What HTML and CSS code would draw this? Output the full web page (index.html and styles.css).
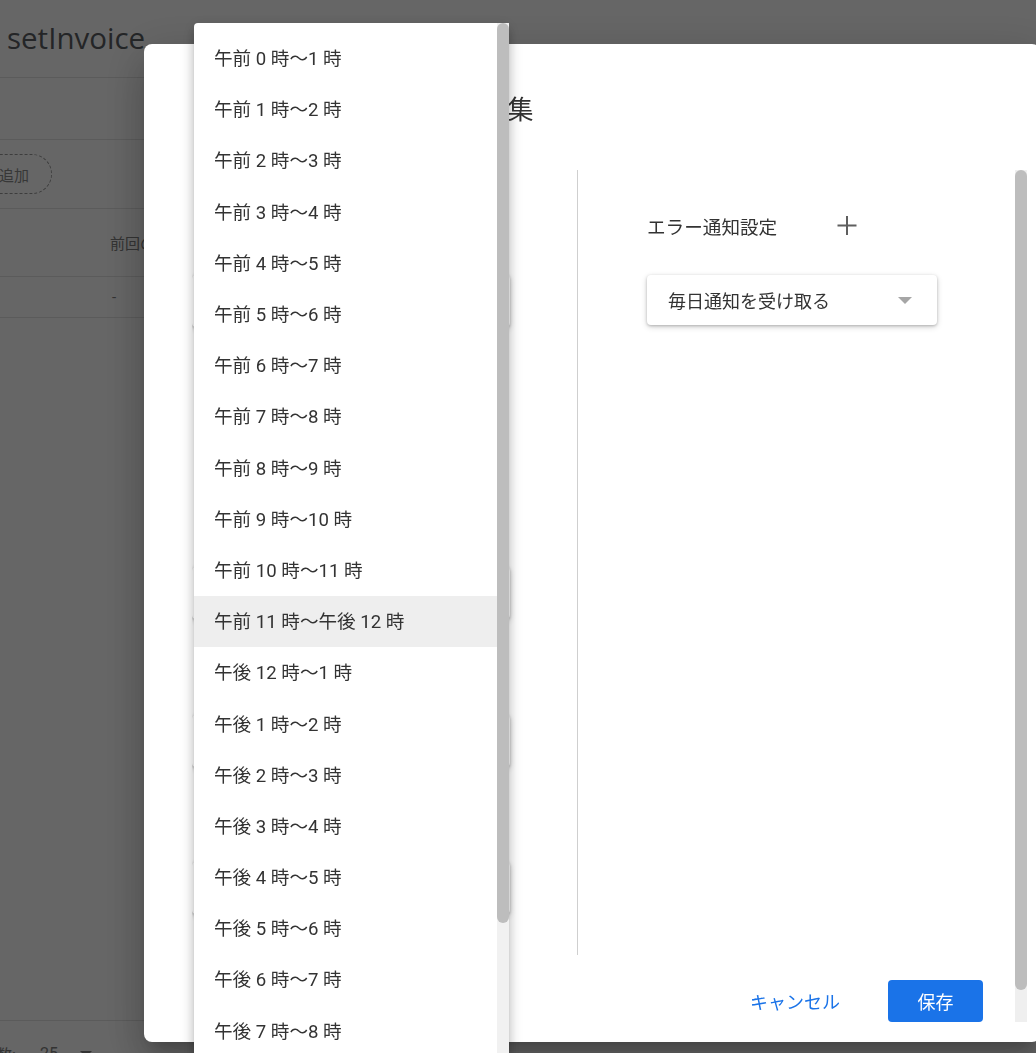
FILE: index.html
```html
<!DOCTYPE html>
<html lang="ja">
<head>
<meta charset="utf-8">
<title>setInvoice</title>
<link rel="stylesheet" href="styles.css">
</head>
<body>
<div class="page">
  <header class="app-header">setInvoice</header>
  <div class="subbar"></div>
  <div class="actions"><button class="add-btn">追加</button></div>
  <div class="table-head"><span class="col-last">前回の実行</span></div>
  <div class="table-row"><span class="col-last">-</span></div>
  <div class="spacer"></div>
  <footer class="paginator"><span>数:</span><span class="pg-size">25</span><span class="pg-arrow"></span></footer>
</div>

<div class="overlay"></div>

<div class="dialog">
  <h1 class="dialog-title">setInvoice のトリガーを編集</h1>
  <div class="dialog-body">
    <div class="dialog-scroll">
      <div class="columns">
        <div class="col-left">
          <div class="field f1">
            <div class="field-label">実行する関数を選択</div>
            <div class="select-box">setInvoice<span class="caret"></span></div>
          </div>
          <div class="field f2">
            <div class="field-label">イベントのソースを選択</div>
            <div class="select-box">時間主導型<span class="caret"></span></div>
          </div>
          <div class="field f3">
            <div class="field-label">時間ベースのトリガーのタイプを選択</div>
            <div class="select-box">日付ベースのタイマー<span class="caret"></span></div>
          </div>
          <div class="field f4">
            <div class="field-label">時刻を選択</div>
            <div class="select-box">午前 11 時～午後 12 時<span class="caret"></span></div>
          </div>
        </div>
        <div class="divider"></div>
        <div class="col-right">
          <div class="notify-row">
            <span class="notify-label">エラー通知設定</span>
            <button class="icon-btn" aria-label="追加">
              <svg width="20" height="20" viewBox="0 0 20 20"><path d="M10 1V20M0.5 10.5H19.5" stroke="#5f5f5f" stroke-width="2" fill="none"/></svg>
            </button>
          </div>
          <div class="select-box notify-select">毎日通知を受け取る<span class="caret"></span></div>
        </div>
      </div>
      <div class="dialog-actions">
        <button class="btn-text">キャンセル</button>
        <button class="btn-primary">保存</button>
      </div>
    </div>
    <div class="scrollbar"><div class="thumb dialog-thumb"></div></div>
  </div>
</div>

<div class="menu">
  <ul class="menu-list">
    <li class="option">午前 0 時～1 時</li>
    <li class="option">午前 1 時～2 時</li>
    <li class="option">午前 2 時～3 時</li>
    <li class="option">午前 3 時～4 時</li>
    <li class="option">午前 4 時～5 時</li>
    <li class="option">午前 5 時～6 時</li>
    <li class="option">午前 6 時～7 時</li>
    <li class="option">午前 7 時～8 時</li>
    <li class="option">午前 8 時～9 時</li>
    <li class="option">午前 9 時～10 時</li>
    <li class="option">午前 10 時～11 時</li>
    <li class="option selected">午前 11 時～午後 12 時</li>
    <li class="option">午後 12 時～1 時</li>
    <li class="option">午後 1 時～2 時</li>
    <li class="option">午後 2 時～3 時</li>
    <li class="option">午後 3 時～4 時</li>
    <li class="option">午後 4 時～5 時</li>
    <li class="option">午後 5 時～6 時</li>
    <li class="option">午後 6 時～7 時</li>
    <li class="option">午後 7 時～8 時</li>
    <li class="option">午後 8 時～9 時</li>
  </ul>
  <div class="scrollbar"><div class="thumb menu-thumb"></div></div>
</div>
</body>
</html>
```

FILE: styles.css
```css
* { box-sizing: border-box; }
html, body { margin: 0; padding: 0; height: 100%; overflow: hidden; }
body {
  font-family: Roboto, "Noto Sans CJK JP", sans-serif;
  color: #333;
  background: #fff;
}
button { font-family: inherit; }

/* background page */
.page {
  display: flex;
  flex-direction: column;
  min-height: 1086px;
}
.app-header {
  height: 78px;
  border-bottom: 1px solid #e4e4e4;
  padding: 0 0 3px 7px;
  display: flex;
  align-items: center;
  font-family: "Open Sans", Roboto, sans-serif;
  font-size: 29.5px;
  color: #5a5e62;
}
.subbar { height: 62px; border-bottom: 1px solid #e4e4e4; }
.actions {
  height: 69px;
  border-bottom: 1px solid #e4e4e4;
  display: flex;
  align-items: center;
}
.add-btn {
  margin-left: -50px;
  height: 40px;
  width: 102px;
  border: 1px dashed #9a9a9a;
  border-radius: 20px;
  background: transparent;
  font-size: 15px;
  color: #8a8a8a;
  text-align: right;
  padding-right: 22px;
}
.table-head, .table-row {
  border-bottom: 1px solid #e4e4e4;
  display: flex;
  align-items: center;
  font-size: 15px;
  color: #808080;
}
.table-head { height: 68px; }
.table-row { height: 41px; }
.col-last { margin-left: 110px; }
.table-row .col-last { margin-left: 112px; }
.spacer { flex: 1; }
.paginator {
  border-top: 1px solid #e4e4e4;
  height: 66px;
  display: flex;
  align-items: center;
  font-size: 16px;
  color: #808080;
  margin-left: -4px;
}
.pg-size { margin-left: 24px; }
.pg-arrow {
  margin-left: 22px;
  width: 0; height: 0;
  border-left: 6px solid transparent;
  border-right: 6px solid transparent;
  border-top: 6px solid #808080;
}

.overlay {
  position: fixed;
  inset: 0;
  background: rgba(0, 0, 0, 0.6);
}

/* dialog */
.dialog {
  position: fixed;
  left: 144px;
  top: 44px;
  width: 896px;
  height: 998px;
  background: #fff;
  border-radius: 8px;
  box-shadow: 0 11px 15px -7px rgba(0,0,0,.2), 0 24px 38px 3px rgba(0,0,0,.14), 0 9px 46px 8px rgba(0,0,0,.12);
  padding: 48px 13px 20px 48px;
  display: flex;
  flex-direction: column;
}
.dialog-title {
  margin: 0 0 42px 9px;
  height: 36px;
  line-height: 36px;
  font-size: 26px;
  font-weight: 400;
  color: #333;
  white-space: nowrap;
}
.dialog-body {
  flex: 1;
  display: flex;
  min-height: 0;
}
.dialog-scroll {
  flex: 1;
  display: flex;
  flex-direction: column;
  overflow: hidden;
}
.columns {
  height: 785px;
  display: flex;
  flex-shrink: 0;
}
.col-left {
  width: 385px;
  display: flex;
  flex-direction: column;
}
.field { display: flex; flex-direction: column; }
.f1 { margin-top: 35px; gap: 30px; }
.f2 { margin-top: 170px; gap: 30px; }
.f3 { margin-top: 40px; gap: 16px; }
.f4 { margin-top: 39px; gap: 16px; }
.field-label {
  font-size: 16px;
  color: #333;
  height: 40px;
  line-height: 40px;
  padding-left: 6px;
  white-space: nowrap;
}
.select-box {
  position: relative;
  height: 52px;
  width: 318px;
  border-radius: 4px;
  background: #fff;
  box-shadow: 0 1px 3px rgba(0,0,0,.22), 0 2px 6px rgba(0,0,0,.16);
  display: flex;
  align-items: center;
  padding-left: 21px;
  font-size: 18px;
  color: #333;
}
.caret {
  position: absolute;
  right: 25px;
  top: 23px;
  width: 0; height: 0;
  border-left: 7px solid transparent;
  border-right: 7px solid transparent;
  border-top: 7px solid #a6a6a6;
}
.divider {
  width: 1px;
  background: #cfcfcf;
}
.col-right {
  flex: 1;
  padding: 35px 0 0 69px;
  display: flex;
  flex-direction: column;
}
.notify-row {
  height: 40px;
  display: flex;
  align-items: center;
}
.notify-label {
  font-size: 18.6px;
  color: #333;
}
.icon-btn {
  margin-left: 50px;
  width: 40px;
  height: 40px;
  border: 0;
  background: transparent;
  padding: 0;
  display: flex;
  align-items: center;
  justify-content: center;
}
.notify-select {
  margin-top: 30px;
  width: 290px;
  height: 50px;
}
.notify-select .caret { right: 25px; top: 22px; }
.dialog-actions {
  margin-top: 25px;
  display: flex;
  justify-content: flex-end;
  align-items: center;
  gap: 32px;
  padding-right: 32px;
}
.btn-text {
  border: 0;
  background: transparent;
  font-size: 18px;
  color: #1a73e8;
  padding: 0 16px;
  height: 42px;
}
.btn-primary {
  border: 0;
  background: #1a73e8;
  color: #fff;
  font-size: 18px;
  width: 95px;
  height: 42px;
  border-radius: 4px;
}
.scrollbar {
  width: 12px;
  background: #efefef;
  flex-shrink: 0;
}
.thumb {
  background: #bdbdbd;
  border-radius: 6px;
}
.dialog-thumb { height: 820px; }

/* dropdown menu */
.menu {
  position: fixed;
  left: 194px;
  top: 23px;
  width: 315px;
  height: 1080px;
  background: #fff;
  border-radius: 4px 4px 0 0;
  box-shadow: 0 5px 5px -3px rgba(0,0,0,.2), 0 8px 10px 1px rgba(0,0,0,.14), 0 3px 14px 2px rgba(0,0,0,.12);
  display: flex;
}
.menu-list {
  list-style: none;
  margin: 0;
  padding: 10px 0 0 0;
  flex: 1;
}
.option {
  height: 51.2px;
  display: flex;
  align-items: center;
  padding: 0 0 4px 20px;
  font-size: 18.6px;
  color: #333;
  white-space: nowrap;
}
.option.selected { background: #eeeeee; }
.menu .scrollbar { background: #f1f1f1; }
.menu-thumb { height: 900px; }
```
